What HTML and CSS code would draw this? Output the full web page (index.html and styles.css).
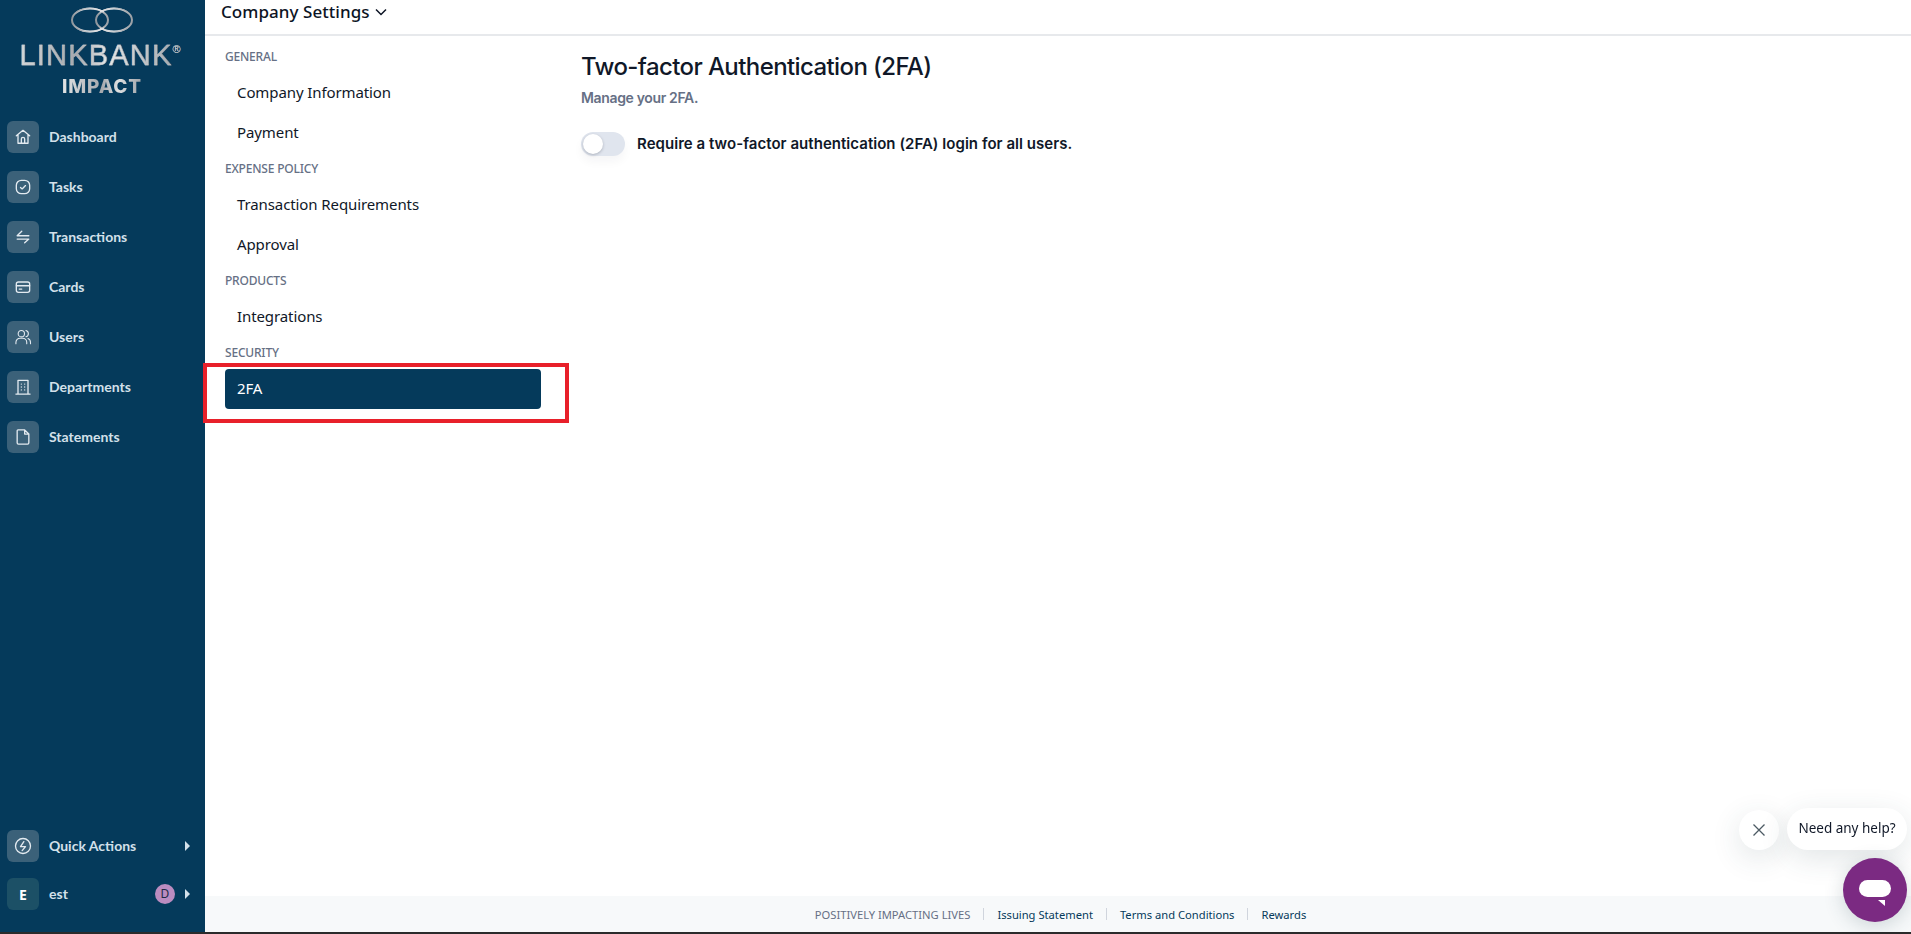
FILE: index.html
```html
<!DOCTYPE html>
<html lang="en">
<head>
<meta charset="utf-8">
<title>Company Settings</title>
<link rel="stylesheet" href="styles.css">
</head>
<body>
<div class="app">
  <aside class="sidebar">
    <div class="logo">
      <svg class="rings" width="64" height="28" viewBox="0 0 64 28" fill="none">
        <defs><linearGradient id="ringg" x1="0" x2="1" y1="0" y2="0"><stop offset="0" stop-color="#8d949b"/><stop offset=".45" stop-color="#f0f1f2"/><stop offset="1" stop-color="#9a9fa5"/></linearGradient></defs>
        <ellipse cx="20" cy="14" rx="18" ry="11.5" stroke="url(#ringg)" stroke-width="2"/>
        <ellipse cx="44" cy="14" rx="18" ry="11.5" stroke="url(#ringg)" stroke-width="2"/>
        <path d="M6 6C14 1 26 1 34 6M30 22C38 27 50 27 58 22M30 6C38 1 50 1 58 6M6 22C14 27 26 27 34 22" stroke="url(#ringg)" stroke-width="1"/>
      </svg>
      <div class="logo-name">LINKBANK<sup class="reg">®</sup></div>
      <div class="logo-sub">IMPACT</div>
    </div>
    <nav class="main-nav">
      <a class="nav-item"><span class="nav-ico"><svg viewBox="0 0 24 24"><path d="M4 10.500 12 4l8 6.500M6 9v10.500h12V9M10 19.500v-5a2 2 0 0 1 4 0v5"/></svg></span><span class="nav-text">Dashboard</span></a>
      <a class="nav-item"><span class="nav-ico"><svg viewBox="0 0 24 24"><rect x="4" y="4" width="16" height="16" rx="6"/><path d="m9 12.500 2 1.800 4-4"/></svg></span><span class="nav-text">Tasks</span></a>
      <a class="nav-item"><span class="nav-ico"><svg viewBox="0 0 24 24"><path d="M5 10.500h14M10.500 5 5 10.500M5 14.500h14M19 14.500 14 19"/></svg></span><span class="nav-text">Transactions</span></a>
      <a class="nav-item"><span class="nav-ico"><svg viewBox="0 0 24 24"><rect x="4" y="6" width="16" height="12.500" rx="2.500"/><path d="M4 10.500h16M7.500 14.500h3"/></svg></span><span class="nav-text">Cards</span></a>
      <a class="nav-item"><span class="nav-ico"><svg class="thin" viewBox="0 0 24 24"><circle cx="10" cy="8" r="3.800"/><path d="M3.500 20v-1.500a5 5 0 0 1 5-5h3a5 5 0 0 1 5 5V20M15.500 4.300a3.800 3.800 0 0 1 0 7.400M18 13.800a5 5 0 0 1 3 4.700V20"/></svg></span><span class="nav-text">Users</span></a>
      <a class="nav-item"><span class="nav-ico"><svg viewBox="0 0 24 24"><path d="M3.500 20.500h17M6 20.500V4h12v16.500M10 8.500h.01M14 8.500h.01M10 12h.01M14 12h.01M10 15.500h.01M14 15.500h.01"/></svg></span><span class="nav-text">Departments</span></a>
      <a class="nav-item"><span class="nav-ico"><svg viewBox="0 0 24 24"><path d="M6 3.500h8l5 5V19a1.500 1.500 0 0 1-1.500 1.500h-11A1.500 1.500 0 0 1 5 19V4.500a1 1 0 0 1 1-1ZM14 3.500v5h5"/></svg></span><span class="nav-text">Statements</span></a>
    </nav>
    <div class="side-bottom">
      <a class="nav-item"><span class="nav-ico"><svg viewBox="0 0 24 24"><circle cx="12" cy="12" r="9"/><path d="M13 6.800 9 12.800h6l-4 4.700"/></svg></span><span class="nav-text grow">Quick Actions</span><span class="caret"></span></a>
      <a class="nav-item"><span class="nav-ico teal">E</span><span class="nav-text grow">est</span><span class="avatar">D</span><span class="caret"></span></a>
    </div>
  </aside>
  <div class="main">
    <header class="topbar">
      <span class="top-title">Company Settings</span>
      <svg class="chev" width="14" height="14" viewBox="0 0 14 14"><path d="m2 4.500 5 5 5-5"/></svg>
    </header>
    <div class="body-row">
      <nav class="settings-nav">
        <div class="group">GENERAL</div>
        <a class="link">Company Information</a>
        <a class="link">Payment</a>
        <div class="group">EXPENSE POLICY</div>
        <a class="link">Transaction Requirements</a>
        <a class="link">Approval</a>
        <div class="group">PRODUCTS</div>
        <a class="link">Integrations</a>
        <div class="group">SECURITY</div>
        <div class="highlight"><a class="link active">2FA</a></div>
      </nav>
      <section class="content">
        <h1 class="title">Two-factor Authentication (2FA)</h1>
        <p class="subtitle">Manage your 2FA.</p>
        <div class="toggle-row">
          <span class="toggle"><span class="knob"></span></span>
          <span class="toggle-label">Require a two-factor authentication (2FA) login for all users.</span>
        </div>
      </section>
    </div>
    <footer class="footer">
      <span class="muted">POSITIVELY IMPACTING LIVES</span><i class="sep"></i>
      <a>Issuing Statement</a><i class="sep"></i>
      <a>Terms and Conditions</a><i class="sep"></i>
      <a>Rewards</a>
    </footer>
  </div>
</div>
<div class="chat-close"><svg width="14" height="14" viewBox="0 0 14 14"><path d="m1.500 1.500 11 11M12.500 1.500l-11 11"/></svg></div>
<div class="chat-bubble">Need any help?</div>
<div class="chat-btn"><svg width="32" height="26" viewBox="0 0 32 26"><rect x="0" y="0" width="32" height="17" rx="8.500" fill="#fff"/><path d="M19 20h7v6z" fill="#fff"/></svg></div>
</body>
</html>
```
FILE: styles.css
```css
* { box-sizing: border-box; }
html, body { margin: 0; height: 100%; }
body {
  background: #fff;
  font-family: "Noto Sans", sans-serif;
  color: #101828;
  overflow: hidden;
  border-bottom: 2px solid #2b2b2b;
}
.app { display: flex; height: 932px; }

.sidebar {
  width: 205px;
  flex: none;
  background: #053a5b;
  display: flex;
  flex-direction: column;
  padding: 6px 0 22px;
}
.logo { display: flex; flex-direction: column; align-items: center; height: 115px; }
.rings { display: block; margin-right: 2px; }
.logo-name {
  font-family: "Liberation Sans", sans-serif;
  font-size: 29px;
  line-height: 30px;
  margin-top: 6px;
  margin-right: 5px;
  letter-spacing: 1.2px;
  -webkit-text-stroke: .35px #c3c6ca;
  background: linear-gradient(90deg, #d5d7d9, #a5a8ad 35%, #e6e7e8 55%, #9da1a7);
  -webkit-background-clip: text;
  background-clip: text;
  color: transparent;
  white-space: nowrap;
}
.reg { font-size: 11px; line-height: 0; vertical-align: 12px; color: #c4c8cc; -webkit-text-stroke: 0; letter-spacing: 0; }
.logo-sub {
  font-family: "Inter", sans-serif;
  font-weight: 800;
  font-size: 19px;
  line-height: 22px;
  margin-top: 6px;
  letter-spacing: .9px;
  margin-right: 1px;
  background: linear-gradient(90deg, #e3e4e5, #a5a8ad 50%, #dfe0e1 70%, #9da1a7);
  -webkit-background-clip: text;
  background-clip: text;
  color: transparent;
}
.main-nav { display: flex; flex-direction: column; gap: 18px; }
.nav-item { display: flex; align-items: center; height: 32px; padding: 0 15px 0 7px; color: #d3e0ea; }
.nav-ico {
  width: 32px; height: 32px; flex: none;
  background: #3b6179;
  border-radius: 6px;
  display: flex; align-items: center; justify-content: center;
}
.nav-ico svg { width: 20px; height: 20px; fill: none; stroke: #e3eaf0; stroke-width: 1.600; stroke-linecap: round; stroke-linejoin: round; }
.nav-ico svg.thin { stroke-width: 1.300; }
.nav-ico.teal { background: #1c5066; color: #fff; font: 700 14px "Noto Sans", sans-serif; }
.nav-text { font: 700 14px/20px "Lato", sans-serif; margin-left: 10px; }
.grow { flex: 1; }
.side-bottom { margin-top: auto; display: flex; flex-direction: column; gap: 16px; }
.caret { width: 0; height: 0; border-left: 5px solid #d3e0ea; border-top: 5px solid transparent; border-bottom: 5px solid transparent; }
.avatar {
  width: 20px; height: 20px; border-radius: 50%;
  background: #bb8cc0; color: #1e2a44;
  font-size: 12px; line-height: 20px; text-align: center;
  margin-right: 10px;
}

.main { flex: 1; display: flex; flex-direction: column; min-width: 0; }
.topbar {
  height: 36px; flex: none;
  border-bottom: 2px solid #e7e9ec;
  padding: 0 0 10px 16px;
  display: flex; align-items: center; gap: 4px;
}
.top-title { font-size: 17px; font-weight: 500; line-height: 24px; letter-spacing: .05px; color: #0c1424; }
.chev { fill: none; stroke: #0c1424; stroke-width: 1.500; }
.body-row { flex: 1; display: flex; min-height: 0; }
.settings-nav { width: 356px; flex: none; padding: 11px 20px 0; }
.group { font-size: 12px; font-weight: 500; line-height: 20px; color: #667085; height: 20px; letter-spacing: -.2px; }
.link { display: block; height: 40px; padding: 0 12px; font-size: 15px; line-height: 38px; color: #101828; white-space: nowrap; letter-spacing: -.1px; }
.group + .link { margin-top: 6px; }
.link + .group { margin-top: 6px; }
.highlight { margin-left: -22px; width: 366px; height: 60px; border: 4px solid #e8202a; padding: 2px 18px; }
.active { background: #053a5b; color: #fff; border-radius: 4px; width: 316px; }

.content { flex: 1; padding: 15px 0 0 20px; font-family: "Inter", sans-serif; }
.title { margin: 0; font-size: 24px; font-weight: 500; line-height: 32px; color: #101828; letter-spacing: -.6px; }
.subtitle { margin: 5px 0 0; font-size: 14px; font-weight: 600; line-height: 20px; color: #667085; letter-spacing: -.35px; }
.toggle-row { display: flex; align-items: center; gap: 12px; margin-top: 24px; }
.toggle { width: 44px; height: 24px; background: #e0e5ee; border-radius: 12px; padding: 2px; flex: none; box-shadow: 0 6px 10px rgba(16,24,40,.04); }
.knob { display: block; width: 20px; height: 20px; border-radius: 50%; background: #fff; box-shadow: 0 1px 3px rgba(16,24,40,.25); }
.toggle-label { font-size: 15px; font-weight: 600; line-height: 24px; letter-spacing: .04px; color: #101828; }

.footer {
  height: 36px; flex: none;
  background: #f7f9fa;
  display: flex; align-items: center; justify-content: center; gap: 13px;
  padding-left: 5px;
  font-size: 11.200px; color: #053a5b;
}
.muted { color: #667085; }
.sep { width: 1px; height: 12px; background: #d0d5dd; }

.chat-close, .chat-bubble, .chat-btn { position: fixed; }
.chat-close {
  left: 1739px; top: 810px; width: 40px; height: 40px; border-radius: 50%;
  background: #fff; box-shadow: 0 8px 30px rgba(40,70,80,.14);
  display: flex; align-items: center; justify-content: center;
}
.chat-close path { stroke: #4c5a63; stroke-width: 1.300; fill: none; }
.chat-bubble {
  left: 1787px; top: 808px; width: 120px; height: 42px; border-radius: 21px;
  background: #fff; box-shadow: 0 8px 30px rgba(40,70,80,.14);
  font-size: 13.500px; line-height: 41px; text-align: center; color: #101828;
}
.chat-btn {
  left: 1843px; top: 858px; width: 64px; height: 64px; border-radius: 50%;
  background: #7b2a82; box-shadow: 0 4px 20px rgba(40,70,80,.2);
  display: flex; align-items: center; justify-content: center;
  padding-top: 6px;
}
```
